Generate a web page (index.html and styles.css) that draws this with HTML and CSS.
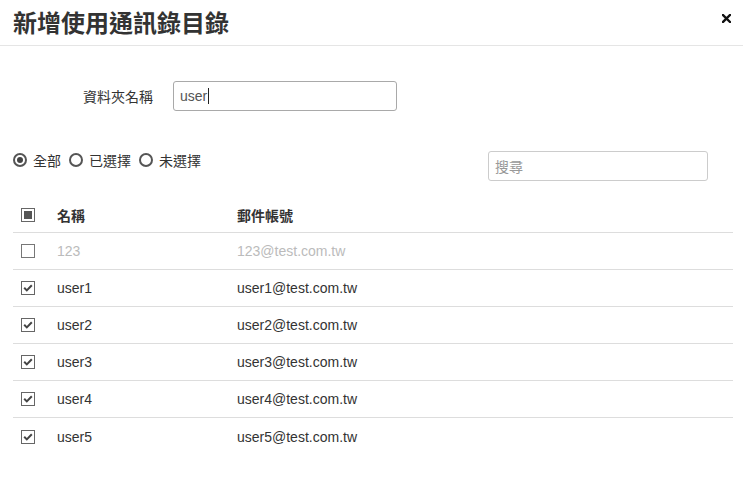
FILE: index.html
```html
<!DOCTYPE html>
<html lang="zh-Hant">
<head>
<meta charset="utf-8">
<title>新增使用通訊錄目錄</title>
<link rel="stylesheet" href="styles.css">
</head>
<body>
<div class="dialog">
  <header class="head">
    <h1 class="title">新增使用通訊錄目錄</h1>
    <button class="close" aria-label="close">
      <svg width="9" height="9" viewBox="0 0 9 9"><path d="M1 1 L8 8 M8 1 L1 8" stroke="#111" stroke-width="2.4" stroke-linecap="square"/></svg>
    </button>
  </header>
  <div class="body">
    <div class="form-row">
      <label class="form-label">資料夾名稱</label>
      <div class="text-input"><span class="val">user</span><span class="caret"></span></div>
    </div>
    <div class="filter-row">
      <div class="radios">
        <span class="radio checked"></span><span class="rlabel">全部</span>
        <span class="radio"></span><span class="rlabel">已選擇</span>
        <span class="radio"></span><span class="rlabel">未選擇</span>
      </div>
      <div class="search"><span class="ph">搜尋</span></div>
    </div>
    <div class="table">
      <div class="tr th">
        <div class="c-chk"><span class="chk partial"><span class="fill"></span></span></div>
        <div class="c-name">名稱</div>
        <div class="c-mail">郵件帳號</div>
      </div>
      <div class="tr dim">
        <div class="c-chk"><span class="chk"></span></div>
        <div class="c-name">123</div>
        <div class="c-mail">123@test.com.tw</div>
      </div>
      <div class="tr">
        <div class="c-chk"><span class="chk on"><svg width="12" height="12" viewBox="0 0 12 12"><path d="M2.2 5.8 L4.8 8.4 L9.8 3.2" fill="none" stroke="#444" stroke-width="2"/></svg></span></div>
        <div class="c-name">user1</div>
        <div class="c-mail">user1@test.com.tw</div>
      </div>
      <div class="tr">
        <div class="c-chk"><span class="chk on"><svg width="12" height="12" viewBox="0 0 12 12"><path d="M2.2 5.8 L4.8 8.4 L9.8 3.2" fill="none" stroke="#444" stroke-width="2"/></svg></span></div>
        <div class="c-name">user2</div>
        <div class="c-mail">user2@test.com.tw</div>
      </div>
      <div class="tr">
        <div class="c-chk"><span class="chk on"><svg width="12" height="12" viewBox="0 0 12 12"><path d="M2.2 5.8 L4.8 8.4 L9.8 3.2" fill="none" stroke="#444" stroke-width="2"/></svg></span></div>
        <div class="c-name">user3</div>
        <div class="c-mail">user3@test.com.tw</div>
      </div>
      <div class="tr">
        <div class="c-chk"><span class="chk on"><svg width="12" height="12" viewBox="0 0 12 12"><path d="M2.2 5.8 L4.8 8.4 L9.8 3.2" fill="none" stroke="#444" stroke-width="2"/></svg></span></div>
        <div class="c-name">user4</div>
        <div class="c-mail">user4@test.com.tw</div>
      </div>
      <div class="tr last">
        <div class="c-chk"><span class="chk on"><svg width="12" height="12" viewBox="0 0 12 12"><path d="M2.2 5.8 L4.8 8.4 L9.8 3.2" fill="none" stroke="#444" stroke-width="2"/></svg></span></div>
        <div class="c-name">user5</div>
        <div class="c-mail">user5@test.com.tw</div>
      </div>
    </div>
  </div>
</div>
</body>
</html>
```
FILE: styles.css
```css
* { box-sizing: border-box; }
html, body { margin: 0; padding: 0; background: #fff; }
body {
  font-family: "Liberation Sans", Arial, "Noto Sans CJK TC", sans-serif;
  font-size: 14px;
  color: #333;
}
.dialog { width: 743px; }
.head {
  height: 46px;
  border-bottom: 1px solid #e5e5e5;
  display: flex;
  align-items: center;
  justify-content: space-between;
  padding: 0 12px 2px 13px;
}
.title {
  margin: 0;
  font-size: 24px;
  font-weight: bold;
  color: #333;
  letter-spacing: 0;
}
.close {
  border: 0;
  background: none;
  padding: 0;
  margin-top: -6px;
  display: flex;
  cursor: pointer;
}
.body { padding: 35px 10px 0 13px; }
.form-row {
  display: flex;
  align-items: center;
  height: 30px;
}
.form-label {
  width: 160px;
  text-align: right;
  padding-right: 20px;
  color: #333;
}
.text-input {
  width: 224px;
  height: 30px;
  border: 1px solid #a9a9a9;
  border-radius: 3px;
  display: flex;
  align-items: center;
  padding-left: 6px;
  color: #555;
}
.caret {
  width: 1px;
  height: 16px;
  background: #222;
  margin-left: 1px;
}
.filter-row {
  margin-top: 40px;
  display: flex;
  justify-content: space-between;
  align-items: flex-start;
  padding-right: 25px;
}
.radios {
  display: flex;
  align-items: center;
  height: 18px;
}
.radio {
  width: 14px;
  height: 14px;
  border: 2px solid #555;
  border-radius: 50%;
  position: relative;
  margin-right: 6px;
}
.radio.checked::after {
  content: "";
  position: absolute;
  left: 2px;
  top: 2px;
  width: 6px;
  height: 6px;
  border-radius: 50%;
  background: #444;
}
.rlabel { margin-right: 8px; color: #333; }
.search {
  width: 220px;
  height: 30px;
  border: 1px solid #ccc;
  border-radius: 3px;
  display: flex;
  align-items: center;
  padding-left: 6px;
}
.ph { color: #999; }
.table { margin-top: 16px; width: 720px; }
.tr {
  display: flex;
  align-items: center;
  height: 37px;
  border-bottom: 1px solid #ddd;
}
.tr.th { height: 36px; font-weight: bold; }
.tr.last { border-bottom: 0; }
.tr.dim { color: #bbb; }
.c-chk { width: 44px; padding-left: 8px; display: flex; align-items: center; }
.c-name { width: 180px; }
.c-mail { flex: 1; }
.chk {
  width: 14px;
  height: 14px;
  border: 1px solid #777;
  display: flex;
  align-items: center;
  justify-content: center;
  background: #fff;
}
.chk.on { border-color: #666; }
.chk.partial { border-color: #666; }
.chk .fill {
  width: 8px;
  height: 8px;
  background: #555;
}
```
